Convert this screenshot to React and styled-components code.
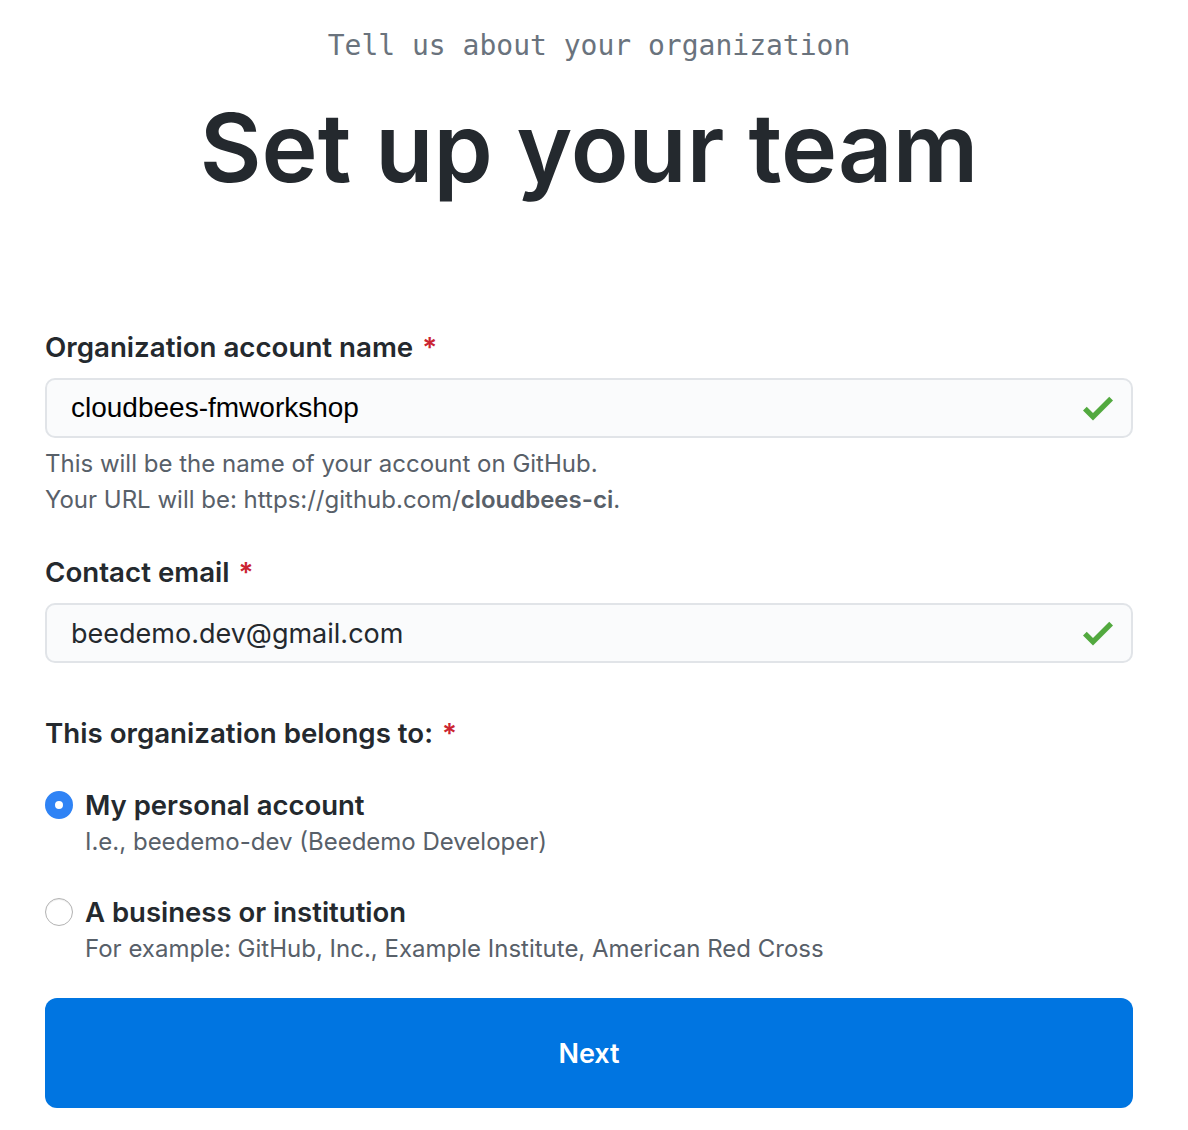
import React from "react";
import styled, { createGlobalStyle } from "styled-components";

const GlobalStyle = createGlobalStyle`
    body {
        margin: 0;
        background: #fff;
        font-family: Inter, "Noto Sans", sans-serif;
        color: #24292e;
    }
`;

const CheckIcon = () => (
    <svg width="30" height="40" viewBox="0 0 12 16" fill="#52a93f">
        <path d="M12 5l-8 8-4-4 1.5-1.5L4 10l6.5-6.5L12 5z" />
    </svg>
);

const App = () => {
    return (
        <Page>
            <GlobalStyle />
            <Header>
                <Kicker>Tell us about your organization</Kicker>
                <Title>Set up your team</Title>
            </Header>

            <Form>
                <Field>
                    <Label>Organization account name <Req>*</Req></Label>
                    <InputBox>
                        <InputText plain>cloudbees-fmworkshop</InputText>
                        <CheckIcon />
                    </InputBox>
                    <Note>
                        This will be the name of your account on GitHub.
                        <br />
                        Your URL will be: https://github.com/<b>cloudbees-ci</b>.
                    </Note>
                </Field>

                <Field>
                    <Label>Contact email <Req>*</Req></Label>
                    <InputBox>
                        <InputText>beedemo.dev@gmail.com</InputText>
                        <CheckIcon />
                    </InputBox>
                </Field>

                <Group>
                    <Label>This organization belongs to: <Req>*</Req></Label>
                    <Options>
                        <Option>
                            <Radio checked />
                            <div>
                                <OptionTitle>My personal account</OptionTitle>
                                <OptionNote>I.e., beedemo-dev (Beedemo Developer)</OptionNote>
                            </div>
                        </Option>
                        <Option>
                            <Radio />
                            <div>
                                <OptionTitle>A business or institution</OptionTitle>
                                <OptionNote>For example: GitHub, Inc., Example Institute, American Red Cross</OptionNote>
                            </div>
                        </Option>
                    </Options>
                </Group>

                <NextButton>Next</NextButton>
            </Form>
        </Page>
    );
};

const Page = styled.div`
    width: 1088px;
    margin-left: 45px;
    padding-top: 28px;
`;

const Header = styled.div`
    text-align: center;
`;

const Kicker = styled.div`
    font-family: "DejaVu Sans Mono", "Liberation Mono", monospace;
    font-size: 28px;
    line-height: 36px;
    color: #6a737d;
`;

const Title = styled.h1`
    margin: 34px 0 0;
    font-size: 95px;
    font-weight: 600;
    line-height: 100px;
    color: #24292e;
`;

const Form = styled.div`
    margin-top: 132px;
`;

const Field = styled.div`
    margin-bottom: 37px;
`;

const Label = styled.div`
    font-size: 27.7px;
    font-weight: 600;
    line-height: 34px;
    margin-bottom: 14px;
`;

const Req = styled.span`
    color: #cb2431;
    margin-left: 2px;
`;

const InputBox = styled.div`
    display: flex;
    align-items: center;
    justify-content: space-between;
    height: 60px;
    box-sizing: border-box;
    padding: 0 18px 0 24px;
    border: 2px solid #e1e4e8;
    border-radius: 10px;
    background: #fafbfc;
`;

const InputText = styled.span`
    font-family: ${(p) => (p.plain ? '"Liberation Sans", Arial, sans-serif' : 'Inter, sans-serif')};
    font-size: ${(p) => (p.plain ? "28px" : "27px")};
    color: ${(p) => (p.plain ? "#000" : "#24292e")};
`;

const Note = styled.p`
    margin: 8px 0 0;
    font-size: 24px;
    line-height: 36px;
    color: #586069;

    b {
        font-weight: 600;
    }
`;

const Group = styled.div`
    margin-top: 53px;
`;

const Options = styled.div`
    display: flex;
    flex-direction: column;
    gap: 35px;
    margin-top: 37px;
`;

const Option = styled.label`
    display: flex;
    align-items: flex-start;
    gap: 12px;
`;

const Radio = styled.span`
    flex: none;
    box-sizing: border-box;
    width: 28px;
    height: 28px;
    margin-top: 4px;
    border-radius: 50%;
    border: ${(p) => (p.checked ? "10px solid #2f83f5" : "1.5px solid #b3b3b3")};
    background: #fff;
    box-shadow: ${(p) => (p.checked ? "none" : "inset 0 1px 1px rgba(0,0,0,0.08)")};
`;

const OptionTitle = styled.div`
    font-size: 27.5px;
    font-weight: 600;
    line-height: 36px;
`;

const OptionNote = styled.div`
    margin-top: 2px;
    font-size: 24px;
    line-height: 34px;
    color: #586069;
`;

const NextButton = styled.button`
    display: block;
    width: 100%;
    height: 110px;
    margin-top: 32px;
    border: none;
    border-radius: 12px;
    background: #0075e1;
    color: #fff;
    font-family: Inter, sans-serif;
    font-size: 27px;
    font-weight: 600;
    cursor: pointer;
`;

export default App;
